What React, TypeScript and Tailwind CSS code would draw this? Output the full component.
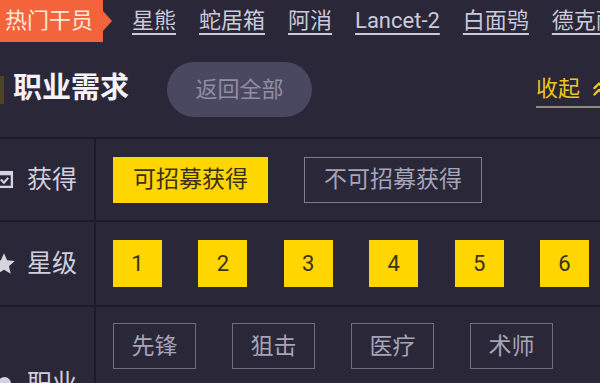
import React from "react";

const links = ["星熊", "蛇居箱", "阿消", "Lancet-2", "白面鸮", "德克萨斯"];
const stars = ["1", "2", "3", "4", "5", "6"];
const classes1 = ["先锋", "狙击", "医疗", "术师"];
const classes2 = ["重装", "辅助", "近卫", "特种"];

function CheckIcon() {
  return (
    <svg width="19" height="19" viewBox="0 0 18 18" className="-ml-[5px] shrink-0">
      <rect x="2" y="2" width="14" height="14" fill="none" stroke="#d4d3de" strokeWidth="2.2" />
      <rect x="2" y="2" width="14" height="3" fill="#d4d3de" />
      <path d="M5.5 9 L8.5 12 L12.5 7.5" fill="none" stroke="#d4d3de" strokeWidth="2" />
    </svg>
  );
}

function StarIcon() {
  return (
    <svg width="26" height="26" viewBox="0 0 24 24" className="-ml-[9px] shrink-0">
      <path
        d="M12 2 L14.9 8.6 L22 9.3 L16.6 14 L18.2 21 L12 17.3 L5.8 21 L7.4 14 L2 9.3 L9.1 8.6 Z"
        fill="#d4d3de"
      />
    </svg>
  );
}

function DotIcon() {
  return <div className="-ml-[2px] h-[13px] w-[13px] shrink-0 rounded-full bg-[#d4d3de]" />;
}

export default function App() {
  return (
    <div className="h-[383px] w-[600px] overflow-hidden bg-[#2a2739] font-['Roboto','Noto_Sans_CJK_SC',sans-serif]">
      {/* top bar */}
      <div className="flex h-[42px] items-center whitespace-nowrap">
        <div className="flex h-[42px] w-[103px] shrink-0 items-center bg-[#f4643c] pl-[5px] text-[22px] leading-none text-[#fde9dd]">
          热门干员
        </div>
        <div className="h-0 w-0 shrink-0 border-y-[10px] border-l-[9px] border-y-transparent border-l-[#f4643c]" />
        <div className="ml-[20px] flex shrink-0 gap-[23px] text-[22px] leading-none text-[#cbcad8]">
          {links.map((l) => (
            <span key={l} className="underline decoration-[1.5px] underline-offset-[5px]">
              {l}
            </span>
          ))}
        </div>
      </div>

      {/* header row */}
      <div className="flex h-[97px] items-center border-b-2 border-[#1e1c2b]">
        <div className="h-[28px] w-[4px] shrink-0 bg-[#4d4520]" />
        <div className="ml-[9px] pb-[3px] text-[29px] font-bold leading-none text-[#f3f3f7]">职业需求</div>
        <div className="ml-[38px] flex h-[55px] w-[145px] shrink-0 items-center justify-center rounded-full bg-[#4a4860] text-[22px] leading-none text-[#8f8da7]">
          返回全部
        </div>
        <div className="-mr-[10px] ml-auto flex shrink-0 items-center gap-[8px] border-b-2 border-[#8d8b82] pb-[6px] pt-[6px]">
          <span className="text-[22px] leading-none text-[#f1c61a]">收起</span>
          <svg width="22" height="22" viewBox="0 0 24 24" fill="none" stroke="#f1c61a" strokeWidth="2.6" strokeLinecap="round" strokeLinejoin="round">
            <path d="M17 11 L12 6 L7 11" />
            <path d="M17 18 L12 13 L7 18" />
          </svg>
        </div>
      </div>

      {/* row 1 */}
      <div className="flex h-[83px] border-b-2 border-[#1e1c2b]">
        <div className="flex w-[96px] shrink-0 items-center border-r-2 border-[#1e1c2b]">
          <CheckIcon />
          <span className="ml-[13px] text-[25px] leading-none text-[#d0cfdc]">获得</span>
        </div>
        <div className="flex items-center gap-[36px] pl-[17px]">
          <div className="flex h-[46px] w-[155px] items-center justify-center bg-[#ffd600] text-[23px] leading-none text-[#3a3217]">
            可招募获得
          </div>
          <div className="flex h-[46px] w-[178px] items-center justify-center border-[1.5px] border-[#7f7d92] text-[23px] leading-none text-[#a6a4b7]">
            不可招募获得
          </div>
        </div>
      </div>

      {/* row 2 */}
      <div className="flex h-[85px] border-b-2 border-[#1e1c2b]">
        <div className="flex w-[96px] shrink-0 items-center border-r-2 border-[#1e1c2b]">
          <StarIcon />
          <span className="ml-[10px] text-[25px] leading-none text-[#d0cfdc]">星级</span>
        </div>
        <div className="flex items-center gap-[36.4px] pl-[17px]">
          {stars.map((s) => (
            <div
              key={s}
              className="flex h-[47px] w-[49px] shrink-0 items-center justify-center bg-[#ffd600] text-[22px] leading-none text-[#3a3217]"
            >
              {s}
            </div>
          ))}
        </div>
      </div>

      {/* row 3 */}
      <div className="flex h-[152px]">
        <div className="flex w-[96px] shrink-0 items-center border-r-2 border-[#1e1c2b]">
          <DotIcon />
          <span className="ml-[16px] text-[25px] leading-none text-[#d0cfdc]">职业</span>
        </div>
        <div className="flex flex-col gap-[28px] pl-[17px] pt-[16px]">
          {[classes1, classes2].map((line, i) => (
            <div key={i} className="flex gap-[36px]">
              {line.map((c) => (
                <div
                  key={c}
                  className="flex h-[46px] w-[83px] shrink-0 items-center justify-center border-[1.5px] border-[#6f6d83] text-[23px] leading-none text-[#a6a4b7]"
                >
                  {c}
                </div>
              ))}
            </div>
          ))}
        </div>
      </div>
    </div>
  );
}
